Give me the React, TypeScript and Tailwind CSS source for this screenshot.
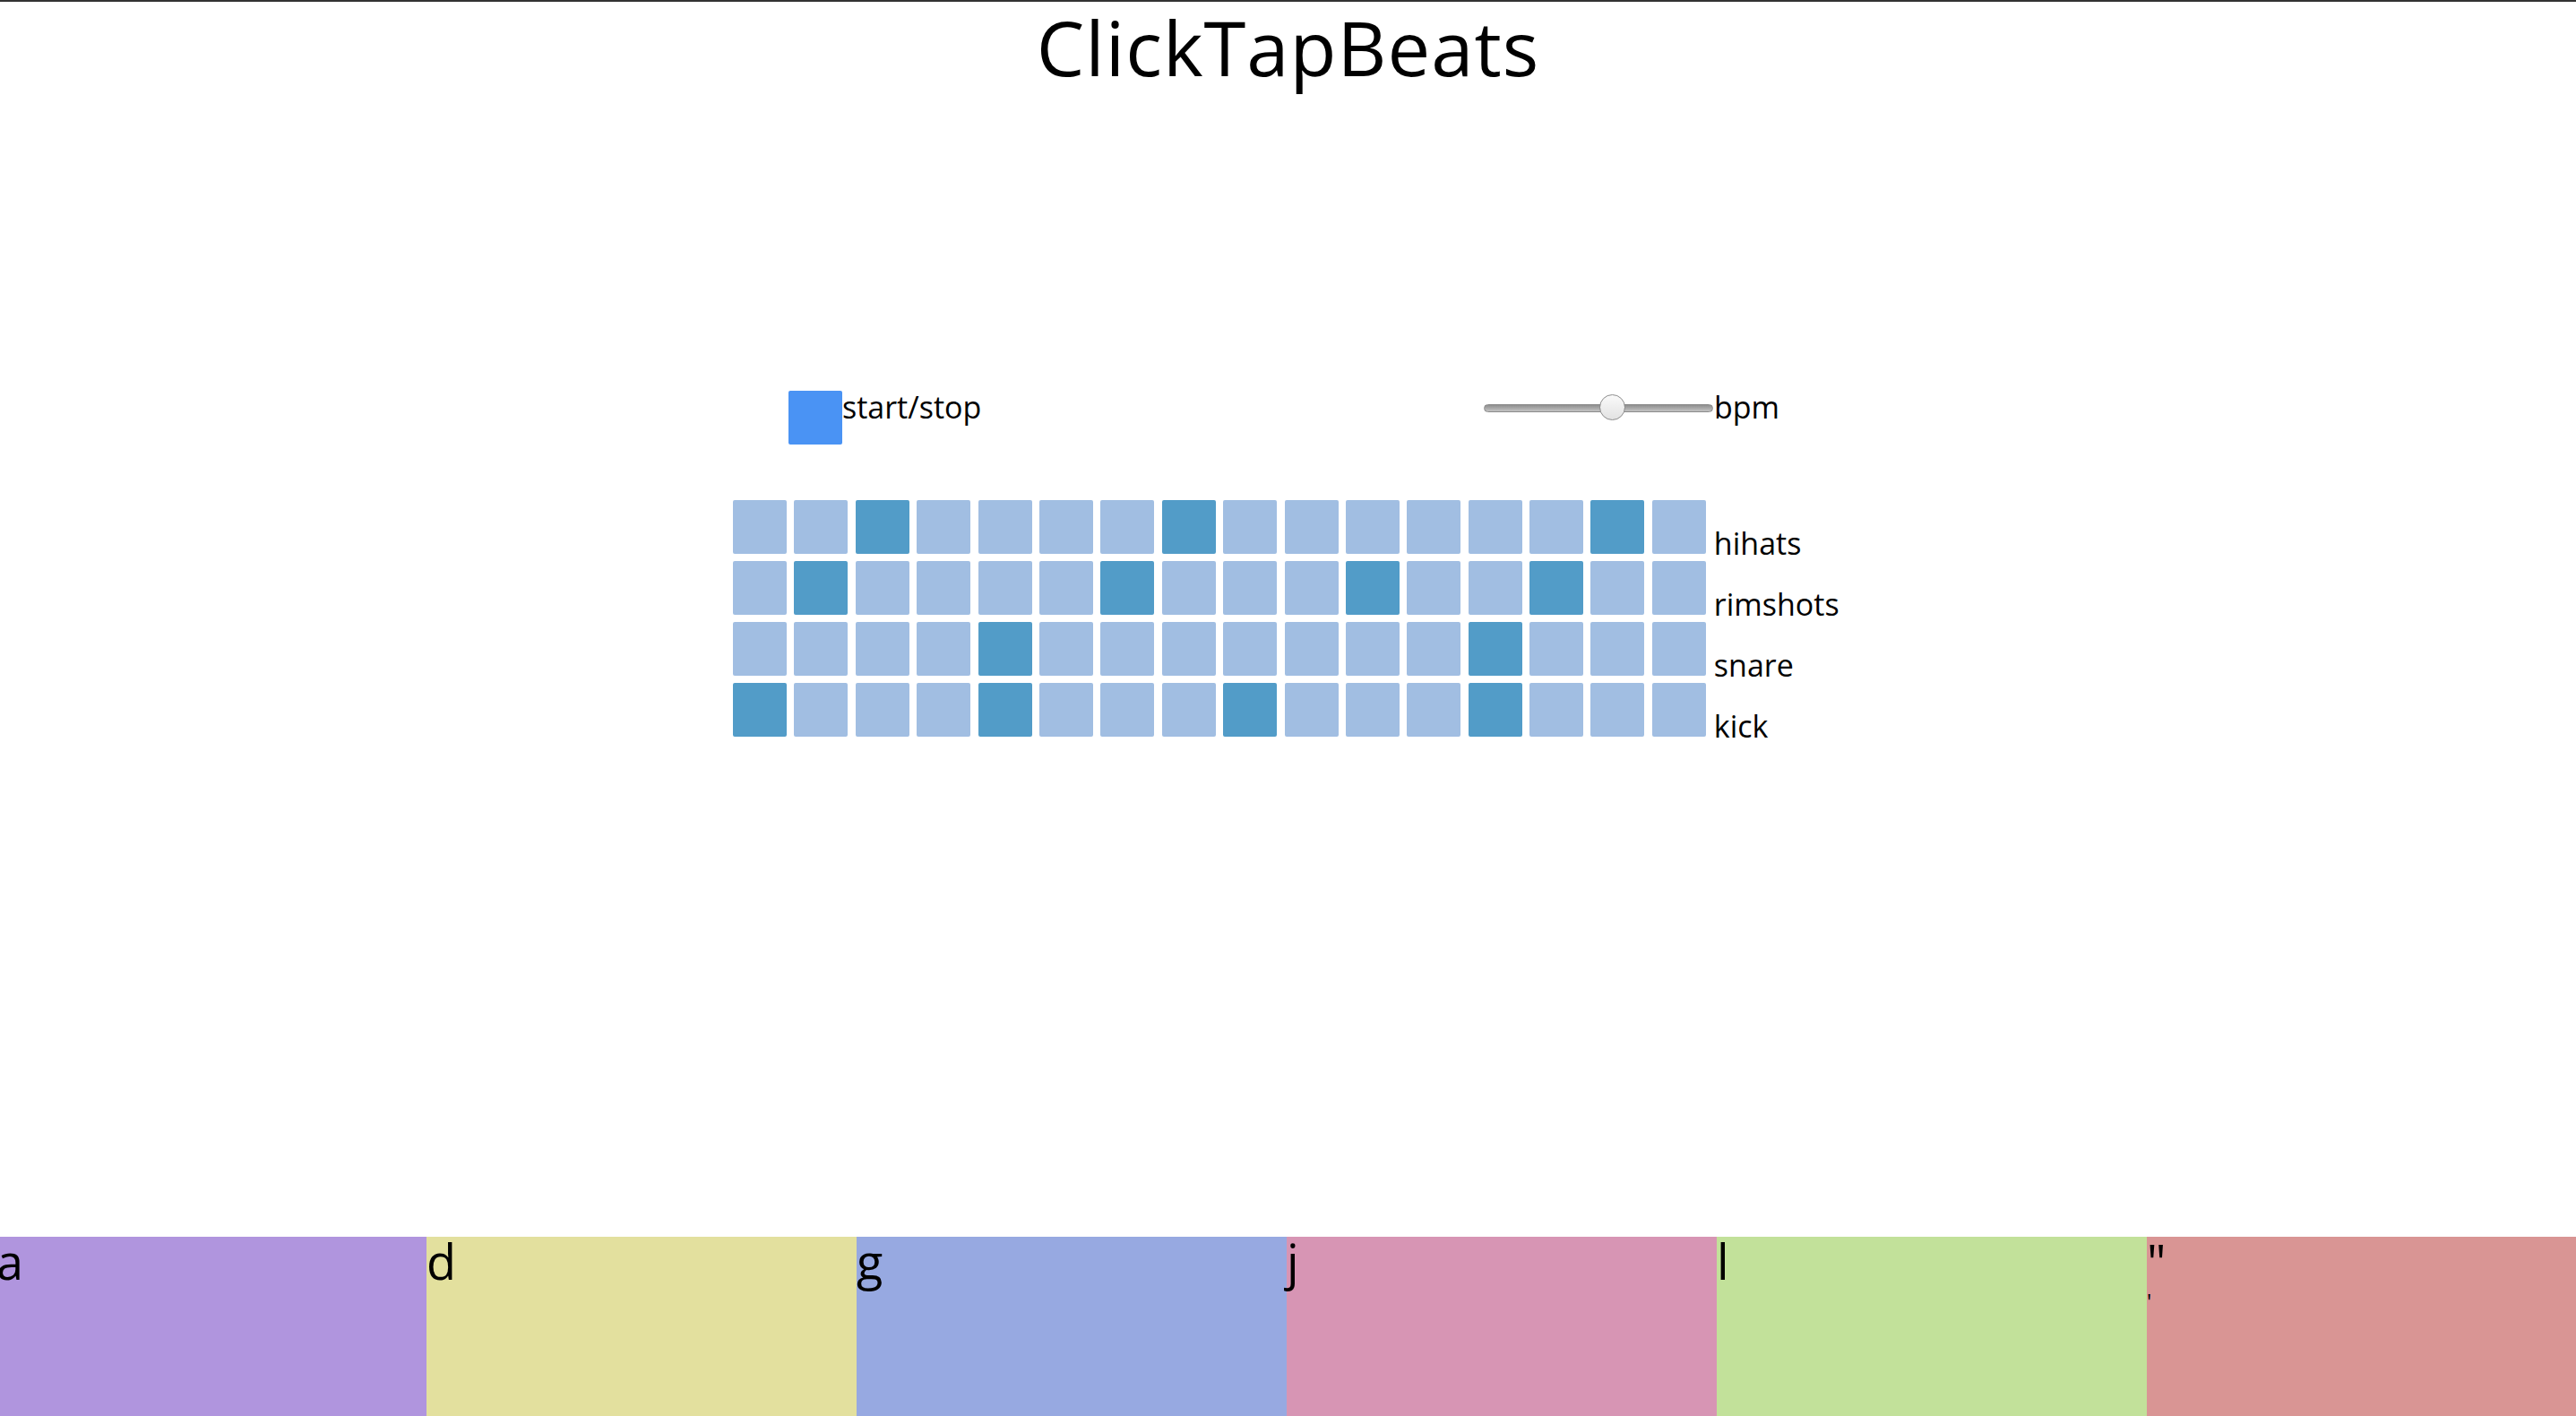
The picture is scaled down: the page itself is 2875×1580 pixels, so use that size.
const rows = [
  { name: "hihats", on: [2, 7, 14] },
  { name: "rimshots", on: [1, 6, 10, 13] },
  { name: "snare", on: [4, 12] },
  { name: "kick", on: [0, 4, 8, 12] },
];

const keys = [
  { label: "a", color: "bg-[#b095de]" },
  { label: "d", color: "bg-[#e3e09e]" },
  { label: "g", color: "bg-[#97a9e1]" },
  { label: "j", color: "bg-[#d795b4]" },
  { label: "l", color: "bg-[#c2e19a]" },
  { label: "\"", color: "bg-[#d99594]" },
];

function Slider() {
  return (
    <div className="relative mt-[4px] h-[30px] w-[256px] flex items-center">
      <div className="h-[9px] w-full rounded-full border border-[#8a8a8a] bg-gradient-to-b from-[#8f8f8f] to-[#c4c4c4]" />
      {/* thumb */}
      <div className="absolute left-[129px] top-[0px] h-[29px] w-[29px] rounded-full border-[1.5px] border-[#8c8c8c] bg-gradient-to-b from-[#fafafa] to-[#e2e2e2]" />
    </div>
  );
}

export default function App() {
  return (
    <div className="h-screen flex flex-col overflow-hidden border-t-2 border-[#333] bg-white text-black font-['Open_Sans',sans-serif]">
      <h1 className="text-center text-[85px] leading-[100px] font-normal tracking-[1px]">ClickTapBeats</h1>

      {/* controls */}
      <div className="mt-[334px] mx-auto w-[1115px] flex items-start">
        <div className="w-[776px] shrink-0 flex items-start">
          <button className="h-[60px] w-[60px] rounded-[2px] bg-[#4a93f4]" />
          <span className="mt-[1px] text-[34px] leading-[34px]">start/stop</span>
        </div>
        <div className="flex items-start">
          <Slider />
          <span className="mt-[1px] ml-px text-[34px] leading-[34px]">bpm</span>
        </div>
      </div>

      {/* sequencer grid */}
      <div className="mt-[62px] mx-auto w-[1239px] flex flex-col gap-[8px]">
        {rows.map((row) => (
          <div key={row.name} className="flex items-end">
            <div className="flex gap-[8.4px]">
              {Array.from({ length: 16 }).map((_, i) => (
                <div
                  key={i}
                  className={`h-[60px] w-[60px] rounded-[2px] ${row.on.includes(i) ? "bg-[#529cc8]" : "bg-[#a1bee2]"}`}
                />
              ))}
            </div>
            <span className="ml-[9px] text-[34px] leading-[24px]">{row.name}</span>
          </div>
        ))}
      </div>

      {/* pads */}
      <div className="mt-auto h-[200px] -ml-[4px] flex">
        {keys.map((k) => (
          <div key={k.label} className={`h-full w-[480px] shrink-0 ${k.color} text-[54px] leading-none`}>
            {k.label}
            {k.label === "\"" && <div className="mt-[6px] text-[24px] leading-none">'</div>}
          </div>
        ))}
      </div>
    </div>
  );
}
